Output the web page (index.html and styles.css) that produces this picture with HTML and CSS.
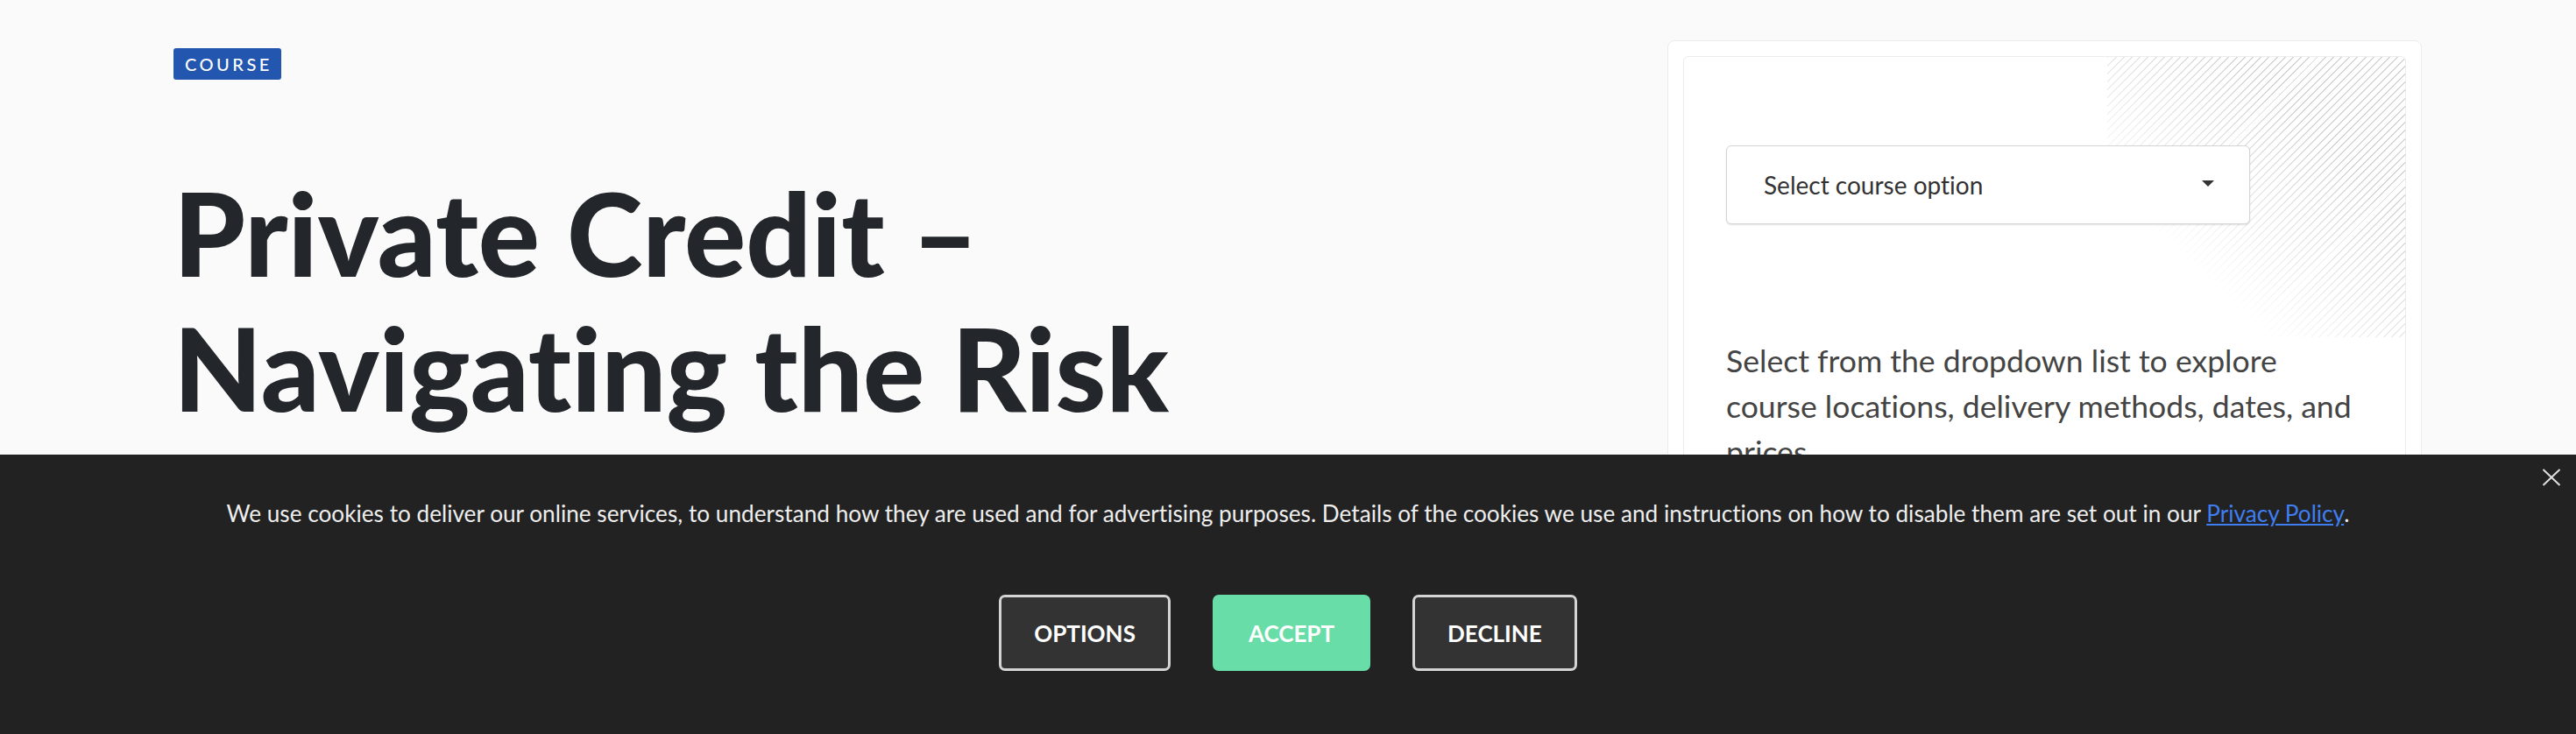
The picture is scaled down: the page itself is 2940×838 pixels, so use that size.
FILE: index.html
```html
<!DOCTYPE html>
<html lang="en">
<head>
<meta charset="utf-8">
<title>Private Credit – Navigating the Risk</title>
<link rel="stylesheet" href="styles.css">
</head>
<body>
<main class="page">
  <section class="intro">
    <span class="badge">COURSE</span>
    <h1 class="title">Private Credit – Navigating the Risk</h1>
  </section>
  <aside class="card">
    <div class="card-inner">
      <div class="card-top">
        <div class="select">
          <span class="select-label">Select course option</span>
          <svg class="caret" width="14" height="7" viewBox="0 0 14 7"><path d="M0 0H14L7 7Z" fill="#333"/></svg>
        </div>
      </div>
      <p class="card-text">Select from the dropdown list to explore course locations, delivery methods, dates, and prices.</p>
    </div>
  </aside>
</main>
<div class="cookie">
  <button class="cookie-close" aria-label="Close">
    <svg width="22" height="20" viewBox="0 0 22 20"><path d="M1.5 1L20.5 19M20.5 1L1.5 19" stroke="#e0e0e0" stroke-width="2" fill="none"/></svg>
  </button>
  <p class="cookie-text">We use cookies to deliver our online services, to understand how they are used and for advertising purposes. Details of the cookies we use and instructions on how to disable them are set out in our <a href="#" class="cookie-link">Privacy Policy</a>.</p>
  <div class="cookie-actions">
    <button class="btn btn-dark">OPTIONS</button>
    <button class="btn btn-accept">ACCEPT</button>
    <button class="btn btn-dark">DECLINE</button>
  </div>
</div>
</body>
</html>
```
FILE: styles.css
```css
* { box-sizing: border-box; }
html, body { margin: 0; padding: 0; }
body {
  background: #fafafa;
  font-family: "Lato", "Liberation Sans", sans-serif;
  font-variant-ligatures: none;
  color: #23262a;
  height: 838px;
  overflow: hidden;
}
.page {
  display: flex;
  justify-content: space-between;
  align-items: flex-start;
  padding: 46px 176px 0 198px;
}
.intro {
  width: 1300px;
  padding-top: 9px;
}
.badge {
  display: inline-block;
  background: #2356ae;
  color: #fff;
  font-size: 20px;
  font-weight: 500;
  letter-spacing: 3.5px;
  line-height: 36px;
  height: 36px;
  padding: 0 10px 0 13px;
  border-radius: 3px;
}
.title {
  margin: 98px 0 0;
  font-size: 131px;
  line-height: 154px;
  font-weight: 900;
  color: #23262a;
}
.card {
  width: 861px;
  background: #fff;
  border: 1px solid #ececec;
  border-radius: 8px;
  padding: 17px;
}
.card-inner {
  border: 1px solid #ececec;
  border-radius: 6px;
  overflow: hidden;
  height: 600px;
}
.card-top {
  position: relative;
  height: 320px;
  padding: 101px 48px 0;
}
.card-top::before {
  content: "";
  position: absolute;
  top: 0;
  right: 0;
  width: 340px;
  height: 320px;
  background: repeating-linear-gradient(135deg, #d6d6d6 0 1.4px, transparent 1.4px 6.5px);
  -webkit-mask-image: linear-gradient(to bottom left, #000 0%, #000 28%, transparent 74%);
  mask-image: linear-gradient(to bottom left, #000 0%, #000 28%, transparent 74%);
}
.select {
  position: relative;
  z-index: 1;
  width: 598px;
  height: 90px;
  background: #fff;
  border: 1px solid #d4d4d4;
  border-radius: 6px;
  box-shadow: 0 1px 2px rgba(0,0,0,0.12);
  display: flex;
  align-items: center;
  justify-content: space-between;
  padding: 0 40px 0 42px;
}
.select-label {
  font-size: 28px;
  color: #333;
}
.caret { display: block; margin-top: -4px; }
.card-text {
  margin: 0;
  padding: 1px 48px 0;
  font-size: 35.6px;
  line-height: 52px;
  color: #444;
}
.cookie {
  position: fixed;
  left: 0;
  right: 0;
  bottom: 0;
  height: 319px;
  background: #222;
  padding: 48px 0 72px;
  text-align: center;
}
.cookie-close {
  position: absolute;
  top: 16px;
  right: 17px;
  width: 22px;
  height: 20px;
  padding: 0;
  border: 0;
  background: none;
}
.cookie-close svg { display: block; }
.cookie-text {
  margin: 0 0 73px;
  font-size: 26.2px;
  line-height: 39px;
  color: #eee;
}
.cookie-link { color: #3f7ef0; text-decoration: underline; }
.cookie-actions {
  display: flex;
  justify-content: center;
  gap: 48px;
}
.btn {
  height: 87px;
  padding: 0 37px;
  border-radius: 7px;
  font-family: "Lato", "Liberation Sans", sans-serif;
  font-size: 26px;
  font-weight: 700;
  color: #fff;
}
.btn-dark {
  background: #333;
  border: 3px solid #d4d4d4;
}
.btn-accept {
  background: #68dda8;
  border: 3px solid #68dda8;
  padding: 0 38px;
}
```
